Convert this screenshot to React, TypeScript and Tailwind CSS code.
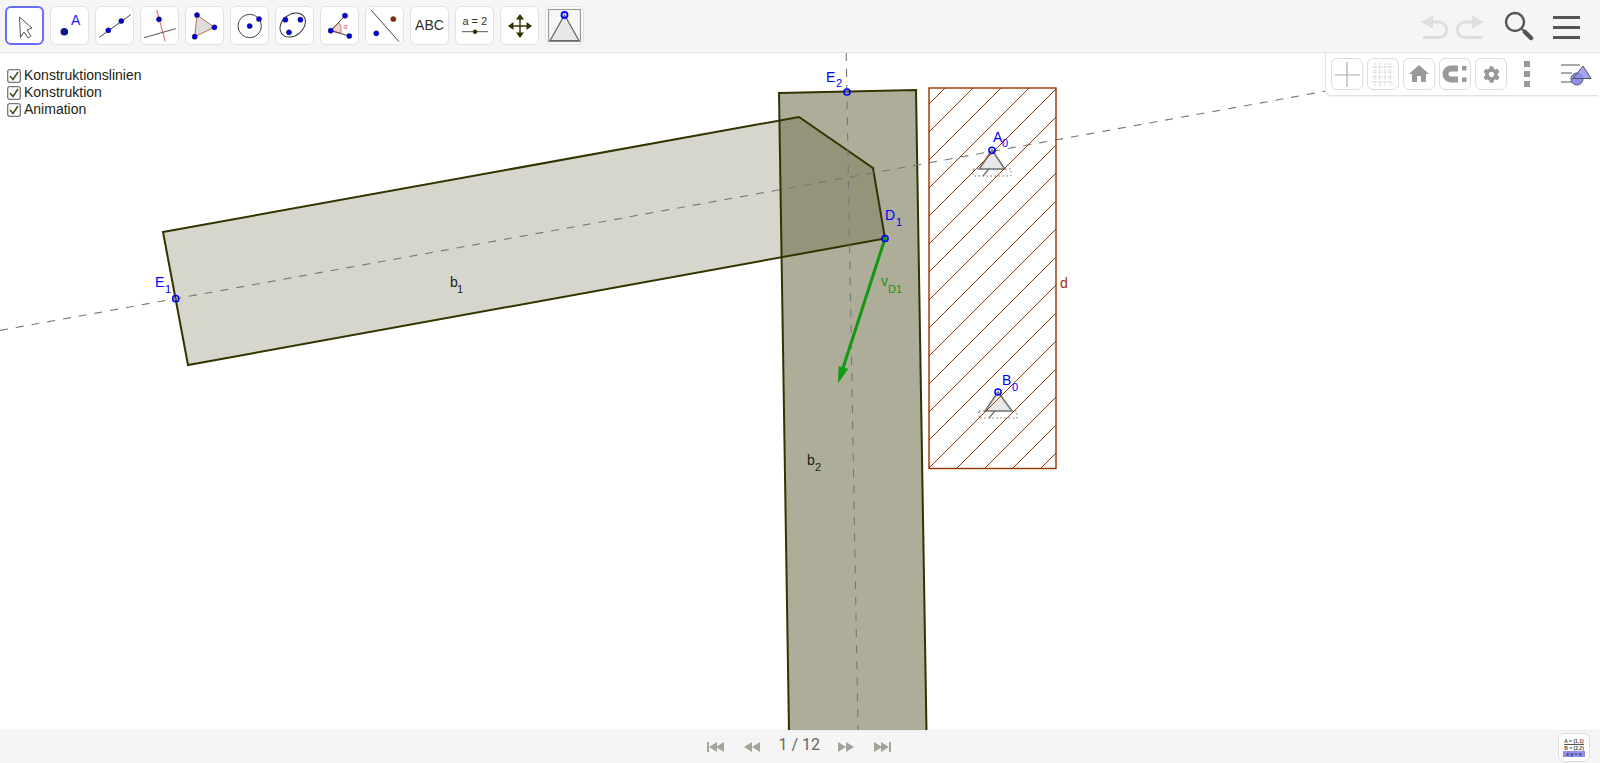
import React from "react";
import { FaCog } from "react-icons/fa";
import { MdHome } from "react-icons/md";

const BLUE = "#0000ff";
const OLIVE = "#333300";
const BROWN = "#993300";
const GREEN = "#119911";

function ToolButton({ selected, children }: { selected?: boolean; children: React.ReactNode }) {
  return (
    <div
      className={
        selected
          ? "h-[39px] w-[39px] shrink-0 rounded-md border-2 border-[#6a6cf6] bg-white"
          : "h-[39px] w-[39px] shrink-0 rounded-md border border-[#e2e2e2] bg-white"
      }
    >
      {children}
    </div>
  );
}

function ToolIcon({ children }: { children: React.ReactNode }) {
  return (
    <svg viewBox="0 0 39 39" className="-m-px block h-[39px] w-[39px]">
      {children}
    </svg>
  );
}

const Dot = ({ x, y, r = 2.6, c = "#0000dd" }: { x: number; y: number; r?: number; c?: string }) => (
  <circle cx={x} cy={y} r={r} fill={c} stroke="#222" strokeWidth="0.4" />
);

function Toolbar() {
  return (
    <div className="flex h-[53px] shrink-0 items-start justify-between border-b border-[#e2e2e2] bg-[#f5f5f5] pt-[6px] pl-[5px]">
      <div className="flex gap-[6px]">
        <ToolButton selected>
          <ToolIcon>
            <path
              d="M13.5 10 L14.5 30.5 L18 25 L22 31 L25 29 L21 23 L26 21 Z"
              fill="#fff"
              stroke="#555"
              strokeWidth="1"
              strokeLinejoin="round"
            />
          </ToolIcon>
        </ToolButton>
        <ToolButton>
          <ToolIcon>
            <circle cx="14.3" cy="25.7" r="3.8" fill="#0a148c" />
            <text x="21" y="19" fontSize="14" fill="#1a1ae6">
              A
            </text>
          </ToolIcon>
        </ToolButton>
        <ToolButton>
          <ToolIcon>
            <line x1="4.3" y1="31.3" x2="35.7" y2="8.7" stroke="#444" strokeWidth="1" />
            <Dot x={13.3} y={24.3} />
            <Dot x={26.3} y={15} />
          </ToolIcon>
        </ToolButton>
        <ToolButton>
          <ToolIcon>
            <line x1="16.7" y1="4" x2="25.3" y2="35.7" stroke="#f07070" strokeWidth="1.1" />
            <line x1="4" y1="31.7" x2="35.7" y2="22.7" stroke="#555" strokeWidth="1" />
            <Dot x={19} y={13.3} />
          </ToolIcon>
        </ToolButton>
        <ToolButton>
          <ToolIcon>
            <polygon points="12,9 29.4,21.3 9.7,30.7" fill="#ddd" stroke="#c0704f" strokeWidth="1" />
            <Dot x={12} y={9} />
            <Dot x={29.4} y={21.3} />
            <Dot x={9.7} y={30.7} />
          </ToolIcon>
        </ToolButton>
        <ToolButton>
          <ToolIcon>
            <circle cx="19.7" cy="20" r="11.7" fill="none" stroke="#444" strokeWidth="1" />
            <Dot x={19.7} y={20} />
            <Dot x={29} y={13} />
          </ToolIcon>
        </ToolButton>
        <ToolButton>
          <ToolIcon>
            <ellipse cx="17.7" cy="19" rx="14" ry="10.5" transform="rotate(-40 17.7 19)" fill="none" stroke="#333" strokeWidth="1" />
            <Dot x={10.4} y={13.7} />
            <Dot x={14} y={26.3} />
            <Dot x={25.4} y={13.7} />
          </ToolIcon>
        </ToolButton>
        <ToolButton>
          <ToolIcon>
            <path d="M10.7 24.7 L19 16.5 Q22 21 21 27 Z" fill="#e6d8d4" stroke="#f07070" strokeWidth="1" />
            <line x1="10.7" y1="24.7" x2="25" y2="9.7" stroke="#444" strokeWidth="1" />
            <line x1="10.7" y1="24.7" x2="29.3" y2="30" stroke="#444" strokeWidth="1" />
            <Dot x={10.7} y={24.7} />
            <Dot x={25} y={9.7} />
            <Dot x={29.3} y={30} />
            <text x="23.5" y="23" fontSize="7" fill="#e05050">
              α
            </text>
          </ToolIcon>
        </ToolButton>
        <ToolButton>
          <ToolIcon>
            <line x1="6" y1="4" x2="34" y2="35.7" stroke="#444" strokeWidth="1" />
            <Dot x={28.3} y={13} c="#8b2a00" />
            <Dot x={11.3} y={27.3} />
          </ToolIcon>
        </ToolButton>
        <ToolButton>
          <div className="flex h-full items-center justify-center text-[14px] text-[#333322]">ABC</div>
        </ToolButton>
        <ToolButton>
          <ToolIcon>
            <text x="19.8" y="19" fontSize="11" textAnchor="middle" fill="#333322">
              a = 2
            </text>
            <line x1="7" y1="25.7" x2="33" y2="25.7" stroke="#555" strokeWidth="1" />
            <circle cx="20" cy="25.7" r="2.2" fill={OLIVE} />
          </ToolIcon>
        </ToolButton>
        <ToolButton>
          <ToolIcon>
            <path d="M20 12 V28 M12 20 H28" stroke={OLIVE} strokeWidth="1.4" />
            <path
              d="M20 8 L24 13.5 H16 Z M20 32 L24 26.5 H16 Z M8 20 L13.5 16 V24 Z M32 20 L26.5 16 V24 Z"
              fill={OLIVE}
            />
          </ToolIcon>
        </ToolButton>
        <ToolButton>
          <ToolIcon>
            <rect x="3.5" y="3.5" width="32" height="32" fill="#f7f7f7" stroke="#999" strokeWidth="1.2" />
            <polygon points="19.5,9 5,34.7 34,34.7" fill="#e8e8e8" stroke="#666" strokeWidth="1.2" />
            <circle cx="19.5" cy="9" r="3" fill="none" stroke={BLUE} strokeWidth="1.8" />
          </ToolIcon>
        </ToolButton>
      </div>
      <div className="mt-[7px] mr-[20px] flex items-center gap-[10px]">
        <svg width="64" height="26" viewBox="0 0 64 26">
          <path d="M0 8 L12 1.5 V14.5 Z" fill="#dedede" />
          <path d="M10 8 H18 A7 7 0 0 1 18 23.5 H2" fill="none" stroke="#dedede" strokeWidth="3" />
          <path d="M63 8 L51 1.5 V14.5 Z" fill="#dedede" />
          <path d="M53 8 H44 A7 7 0 0 0 44 23.5 H62" fill="none" stroke="#dedede" strokeWidth="3" />
        </svg>
        <svg width="30" height="30" viewBox="0 0 30 30" className="-mt-[2px] ml-[9px]">
          <circle cx="11" cy="11" r="9" fill="none" stroke="#555" strokeWidth="2.4" />
          <line x1="18" y1="18" x2="26" y2="26" stroke="#555" strokeWidth="2" />
          <line x1="21" y1="21" x2="27" y2="27" stroke="#555" strokeWidth="4.5" strokeLinecap="round" />
        </svg>
        <div className="ml-[9px] flex flex-col gap-[7px]">
          <div className="h-[3px] w-[27px] bg-[#555]" />
          <div className="h-[3px] w-[27px] bg-[#555]" />
          <div className="h-[3px] w-[27px] bg-[#555]" />
        </div>
      </div>
    </div>
  );
}

function StyleButton({ children }: { children: React.ReactNode }) {
  return (
    <div className="flex h-[32px] w-[32px] items-center justify-center rounded-md border border-[#dddddd] bg-white text-[#999]">
      {children}
    </div>
  );
}

function StyleBar() {
  return (
    <div className="absolute top-0 right-[2px] flex h-[43px] w-[273px] items-center gap-[4px] rounded-bl-md border-b border-l border-[#e2e2e2] bg-white pl-[5px] shadow-[0_1px_1px_rgba(0,0,0,0.06)]">
      <StyleButton>
        <svg width="26" height="26" viewBox="0 0 26 26">
          <path d="M1 14 H26 M13 1 V26" stroke="#aaa" strokeWidth="1.2" />
        </svg>
      </StyleButton>
      <StyleButton>
        <svg width="26" height="26" viewBox="0 0 26 26">
          <path
            d="M2 6 H24 M2 11 H24 M2 16 H24 M2 21 H24 M5 2 V25 M10 2 V25 M15 2 V25 M20 2 V25"
            stroke="#d4d4d4"
            strokeWidth="1"
            strokeDasharray="2 1"
          />
        </svg>
      </StyleButton>
      <StyleButton>
        <MdHome size={24} />
      </StyleButton>
      <StyleButton>
        <svg width="28" height="26" viewBox="0 0 28 26">
          <path d="M17 7.5 H10 A5.5 5.5 0 0 0 10 18.5 H17" fill="none" stroke="#999" strokeWidth="6" />
          <rect x="21" y="5" width="4.5" height="4.5" fill="#999" />
          <rect x="21" y="16.5" width="4.5" height="4.5" fill="#999" />
        </svg>
      </StyleButton>
      <StyleButton>
        <FaCog size={17} />
      </StyleButton>
      <div className="ml-[13px] flex w-[6px] flex-col gap-[4px]">
        <div className="h-[6px] w-[6px] bg-[#999]" />
        <div className="h-[6px] w-[6px] bg-[#999]" />
        <div className="h-[6px] w-[6px] bg-[#999]" />
      </div>
      <svg width="32" height="26" viewBox="0 0 32 26" className="ml-[26px]">
        <path d="M1 4 H20 M1 12 H12 M1 21 H12" stroke="#aaa" strokeWidth="2" />
        <circle cx="17" cy="18" r="6" fill="#8f90f0" stroke="#555" strokeWidth="1" />
        <polygon points="23,5 13,17.5 31,17.5" fill="#8f90f0" fillOpacity="0.8" stroke="#555" strokeWidth="1" />
      </svg>
    </div>
  );
}

function Check({ label }: { label: string }) {
  return (
    <div className="flex h-[17px] items-center gap-[3px] text-[14px] text-[#222211]">
      <svg width="14" height="14" viewBox="0 0 14 14" className="shrink-0">
        <rect x="0.7" y="0.7" width="12.6" height="12.6" rx="2" fill="#fff" stroke="#777" strokeWidth="1.3" />
        <path d="M3 7 L6 10.5 L11 3" fill="none" stroke="#444422" strokeWidth="1.5" />
      </svg>
      <span>{label}</span>
    </div>
  );
}

function Label({
  x,
  y,
  name,
  sub,
  sx,
  sy,
  color = BLUE,
}: {
  x: number;
  y: number;
  name: string;
  sub?: string;
  sx?: number;
  sy?: number;
  color?: string;
}) {
  return (
    <>
      <text x={x} y={y} fontSize="14" fill={color}>
        {name}
      </text>
      {sub && (
        <text x={sx} y={sy} fontSize="11" fill={color}>
          {sub}
        </text>
      )}
    </>
  );
}

function Support({ x, y, baseY, left, right }: { x: number; y: number; baseY: number; left: number; right: number }) {
  return (
    <>
      <polygon points={`${x},${y} ${left},${baseY} ${right},${baseY}`} fill="#e8e8e8" stroke="#777" strokeWidth="1.6" />
      <rect x={x - 19} y={baseY} width="38" height="7" fill="none" stroke="#777" strokeWidth="1" strokeDasharray="1.5 2.5" />
      <line x1={x - 3} y1={baseY} x2={x - 9} y2={baseY + 7} stroke="#777" strokeWidth="1.4" />
    </>
  );
}

const Pt = ({ x, y }: { x: number; y: number }) => (
  <circle cx={x} cy={y} r="3.1" fill="none" stroke={BLUE} strokeWidth="1.5" />
);

function Construction() {
  // hatch lines of the rectangle d: x + y = 1033 + 28k
  const hatch: number[] = [];
  for (let s = 1033; s < 1056 + 469; s += 28) hatch.push(s);

  return (
    <svg viewBox="0 53 1600 677" className="absolute inset-0 h-full w-full">
      <defs>
        <clipPath id="rect-d">
          <rect x="929" y="88" width="127" height="380.5" />
        </clipPath>
      </defs>

      <polygon points="779,93 916,90 926.5,731 789,731" fill={OLIVE} fillOpacity="0.4" stroke={OLIVE} strokeWidth="2" />
      <polygon
        points="163,232 799,117 873,168 885,238.5 188,365"
        fill={OLIVE}
        fillOpacity="0.2"
        stroke={OLIVE}
        strokeWidth="2"
      />

      <line x1="0" y1="330.4" x2="1325" y2="91.3" stroke="#777" strokeWidth="1.1" strokeDasharray="8 8" />
      <line x1="846.2" y1="53" x2="858" y2="730" stroke="#777" strokeWidth="1.1" strokeDasharray="8 8" />

      <Support x={992} y={150} baseY={169} left={979.3} right={1004.7} />
      <Support x={998} y={392} baseY={411} left={985} right={1012} />

      <g clipPath="url(#rect-d)">
        {hatch.map((s) => (
          <line key={s} x1={s - 60} y1={60} x2={s - 480} y2={480} stroke={BROWN} strokeWidth="1" />
        ))}
      </g>
      <rect x="929" y="88" width="127" height="380.5" fill="none" stroke={BROWN} strokeWidth="1.4" />

      <line x1="885" y1="238.5" x2="843" y2="368" stroke={GREEN} strokeWidth="3" />
      <polygon points="838.3,382.5 839,366.7 847.7,369" fill={GREEN} stroke={GREEN} strokeWidth="0.6" />
      <circle cx="885" cy="238.5" r="1.8" fill={GREEN} />

      <Pt x={847} y={92} />
      <Pt x={992} y={150.3} />
      <Pt x={885} y={238.5} />
      <Pt x={175.7} y={298.7} />
      <Pt x={998} y={392} />

      <Label x={826} y={82} name="E" sub="2" sx={836} sy={87} />
      <Label x={993} y={142} name="A" sub="0" sx={1002} sy={147} />
      <Label x={885} y={220} name="D" sub="1" sx={896} sy={226} />
      <Label x={155} y={287} name="E" sub="1" sx={165} sy={293} />
      <Label x={1002} y={385} name="B" sub="0" sx={1012} sy={391} />
      <Label x={450} y={287} name="b" sub="1" sx={457} sy={293} color="#222211" />
      <Label x={807} y={465} name="b" sub="2" sx={815} sy={471} color="#222211" />
      <Label x={1060} y={288} name="d" color={BROWN} />
      <Label x={881} y={286} name="v" sub="D1" sx={888} sy={293} color={GREEN} />
    </svg>
  );
}

function Footer() {
  return (
    <div className="relative flex h-[33px] shrink-0 items-center justify-center border-t border-[#ececec] bg-[#f5f5f5]">
      <div className="ml-[-3px] flex items-center text-[#a3a39a]">
        <svg width="18" height="12" viewBox="0 0 18 12" className="mr-[19px]">
          <path d="M0 1 H2 V11 H0 Z M2 6 L10 1 V11 Z M9 6 L17 1 V11 Z" fill="currentColor" />
        </svg>
        <svg width="17" height="12" viewBox="0 0 17 12" className="mr-[18px]">
          <path d="M0 6 L8 1 V11 Z M8 6 L16 1 V11 Z" fill="currentColor" />
        </svg>
        <span className="-mt-[4px] w-[40px] text-center font-['Roboto',sans-serif] text-[16px] whitespace-nowrap text-[#666]">1 / 12</span>
        <svg width="17" height="12" viewBox="0 0 17 12" className="ml-[18px]">
          <path d="M1 1 L9 6 L1 11 Z M9 1 L17 6 L9 11 Z" fill="currentColor" />
        </svg>
        <svg width="18" height="12" viewBox="0 0 18 12" className="ml-[19px]">
          <path d="M1 1 L9 6 L1 11 Z M8 1 L16 6 L8 11 Z M16 1 H18 V11 H16 Z" fill="currentColor" />
        </svg>
      </div>
      <div className="absolute top-[2px] right-[10px] flex h-[29px] w-[32px] flex-col items-center justify-center rounded-md border border-[#dddddd] bg-white text-[5px] leading-[6px] font-bold text-[#444]">
        <span className="border-b border-[#555]">A = (1,1)</span>
        <span>B = (2,2)</span>
        <span className="w-[22px] bg-[#8f90f0] text-center text-[#334]">x y = x</span>
      </div>
    </div>
  );
}

export default function App() {
  return (
    <div className="flex h-[763px] w-[1600px] flex-col overflow-hidden bg-white font-['Liberation_Sans',Arial,sans-serif]">
      <Toolbar />
      <div className="relative flex-1">
        <Construction />
        <div className="absolute top-[14px] left-[7px] flex flex-col">
          <Check label="Konstruktionslinien" />
          <Check label="Konstruktion" />
          <Check label="Animation" />
        </div>
        <StyleBar />
      </div>
      <Footer />
    </div>
  );
}
